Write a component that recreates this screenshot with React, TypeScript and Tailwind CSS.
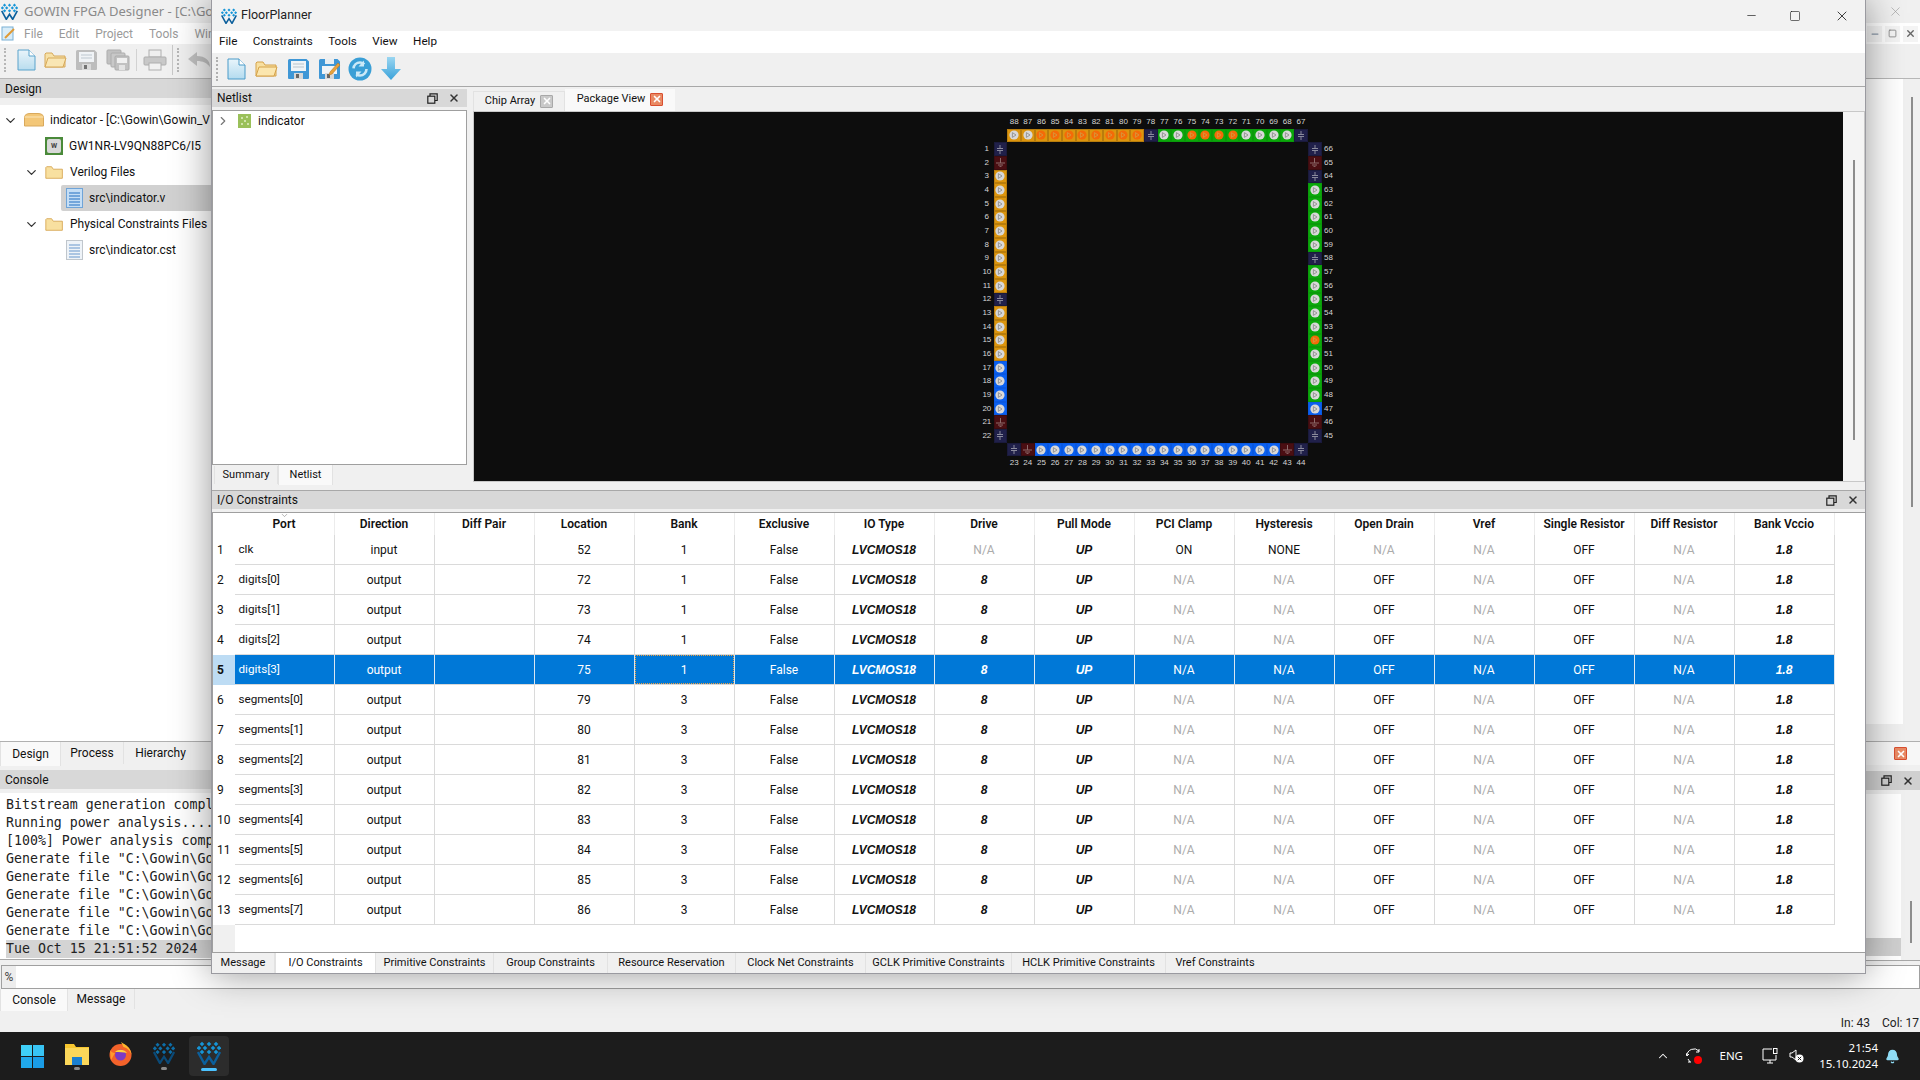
import { Bell, ChevronDown, ChevronRight, ChevronUp, Minus, Square, X } from "lucide-react";

type CellKind = "text" | "na" | "strong";

interface IRow {
  port: string;
  dir: string;
  loc: string;
  bank: string;
  drive: string;
  clamp: string;
  hyst: string;
  drain: string;
}

const columns = ["Port", "Direction", "Diff Pair", "Location", "Bank", "Exclusive", "IO Type", "Drive", "Pull Mode", "PCI Clamp", "Hysteresis", "Open Drain", "Vref", "Single Resistor", "Diff Resistor", "Bank Vccio"];

const output = (port: string, loc: string, bank: string): IRow => ({ port, dir: "output", loc, bank, drive: "8", clamp: "N/A", hyst: "N/A", drain: "OFF" });

const rows: IRow[] = [
  { port: "clk", dir: "input", loc: "52", bank: "1", drive: "N/A", clamp: "ON", hyst: "NONE", drain: "N/A" },
  output("digits[0]", "72", "1"),
  output("digits[1]", "73", "1"),
  output("digits[2]", "74", "1"),
  output("digits[3]", "75", "1"),
  output("segments[0]", "79", "3"),
  output("segments[1]", "80", "3"),
  output("segments[2]", "81", "3"),
  output("segments[3]", "82", "3"),
  output("segments[4]", "83", "3"),
  output("segments[5]", "84", "3"),
  output("segments[6]", "85", "3"),
  output("segments[7]", "86", "3"),
];

type PinKind = "o" | "O" | "g" | "G" | "b" | "n" | "r";

const pinBg: Record<PinKind, string> = {
  o: "bg-[#dc950e] border-[#b97d0c]",
  O: "bg-[#dc950e] border-[#b97d0c]",
  g: "bg-[#0aa80a] border-[#0a9a0a]",
  G: "bg-[#0aa80a] border-[#0a9a0a]",
  b: "bg-[#0a60f0] border-[#0a58e0]",
  n: "bg-[#20204a] border-[#1a1a3c]",
  r: "bg-[#4a0e12] border-[#3c0c0f]",
};

const topPins: [string, PinKind][] = [["88", "o"], ["87", "o"], ["86", "O"], ["85", "O"], ["84", "O"], ["83", "O"], ["82", "O"], ["81", "O"], ["80", "O"], ["79", "O"], ["78", "n"], ["77", "g"], ["76", "g"], ["75", "G"], ["74", "G"], ["73", "G"], ["72", "G"], ["71", "g"], ["70", "g"], ["69", "g"], ["68", "g"], ["67", "n"]];
const leftKinds = "nrooooooooonoooobbbbrn".split("") as PinKind[];
const rightKinds = "nrngggggngggggGggggbrn".split("") as PinKind[];
const bottomKinds = "nrbbbbbbbbbbbbbbbbbbrn".split("") as PinKind[];

function Pin({ kind }: { kind: PinKind }) {
  const hot = kind === "O" || kind === "G";
  return (
    <div className={`flex h-[13.67px] w-[13.67px] items-center justify-center border-[0.5px] ${pinBg[kind]}`}>
      {kind === "n" && (
        <svg width="8" height="9" viewBox="0 0 8 9" fill="none" stroke="#8a8a9c" strokeWidth="1">
          <path d="M4 0v3M1 3.5h6M1 5.5h6M4 6v3" />
        </svg>
      )}
      {kind === "r" && (
        <svg width="9" height="9" viewBox="0 0 9 9" fill="none" stroke="#8c6a6a" strokeWidth="1">
          <path d="M4.5 0v5M0 5h9M2 7h5M3.5 8.6h2" />
        </svg>
      )}
      {kind !== "n" && kind !== "r" && (
        <svg width="10" height="10" viewBox="0 0 10 10">
          <circle cx="5" cy="5" r="4.6" fill={hot ? "#f46a08" : "#d8d8d8"} />
          <path d="M3.4 2.6 7 5 3.4 7.4Z" fill="none" stroke={hot ? "#d49a40" : "#8f8f8f"} strokeWidth="0.9" />
        </svg>
      )}
    </div>
  );
}

function PinNum({ n }: { n: string }) {
  return <div className="flex h-[13.67px] w-[13.67px] items-center justify-center font-['Liberation_Sans',sans-serif] text-[8px] text-[#d6d6d6]">{n}</div>;
}

function PackageView() {
  const side = Array.from({ length: 22 }, (_, i) => i);
  return (
    <div className="ml-[506px] w-[356px] pt-[3px]">
      <div className="flex pl-[27.34px]">{topPins.map(([n]) => <PinNum key={n} n={n} />)}</div>
      <div className="flex pl-[27.34px]">{topPins.map(([n, k]) => <Pin key={n} kind={k} />)}</div>
      <div className="flex">
        <div>{side.map((i) => <PinNum key={i} n={String(i + 1)} />)}</div>
        <div>{side.map((i) => <Pin key={i} kind={leftKinds[i]} />)}</div>
        <div className="w-[300.74px]" />
        <div>{side.map((i) => <Pin key={i} kind={rightKinds[i]} />)}</div>
        <div>{side.map((i) => <PinNum key={i} n={String(66 - i)} />)}</div>
      </div>
      <div className="flex pl-[27.34px]">{side.map((i) => <Pin key={i} kind={bottomKinds[i]} />)}</div>
      <div className="flex pl-[27.34px]">{side.map((i) => <PinNum key={i} n={String(23 + i)} />)}</div>
    </div>
  );
}

function GowinLogo({ size = 16, dim = false }: { size?: number; dim?: boolean }) {
  const top = dim ? "#0d6ea8" : "#1595d8";
  const low = dim ? "#0a4a78" : "#0b5f9c";
  const d = [[5, 3], [12, 3], [19, 3], [2, 7], [8, 7], [16, 7], [22, 7], [5, 11], [12, 11], [19, 11]];
  return (
    <svg width={size} height={size} viewBox="0 0 24 24">
      {d.map(([x, y]) => (
        <path key={`${x}-${y}`} d={`M${x} ${y - 2.3}l2.3 2.3-2.3 2.3-2.3-2.3Z`} fill={top} />
      ))}
      <path d="M1 11 7.5 23 12 16l4.500 7L23 11" fill="none" stroke={low} strokeWidth="2.4" />
    </svg>
  );
}

function DocIcon() {
  return (
    <svg width="19" height="22" viewBox="0 0 19 22">
      <defs>
        <linearGradient id="docFill" x1="0" y1="0" x2="0" y2="1">
          <stop offset="0" stopColor="#e9f5fb" />
          <stop offset="1" stopColor="#b3dbef" />
        </linearGradient>
      </defs>
      <path d="M1 1h11l6 6v14H1Z" fill="url(#docFill)" stroke="#4a9bc9" />
      <path d="M12 1v6h6" fill="#ffffff" stroke="#4a9bc9" />
    </svg>
  );
}

function ListFileIcon({ blue = false }: { blue?: boolean }) {
  const lines = [5, 8, 11, 14, 17];
  return (
    <svg width="17" height="20" viewBox="0 0 17 20">
      <rect x="0.5" y="0.5" width="16" height="19" fill={blue ? "#c5def5" : "#eef3f8"} stroke={blue ? "#6fa4d8" : "#c0c6cc"} />
      {lines.map((y) => (
        <path key={y} d={`M3 ${y}h11`} stroke={blue ? "#4f8fd0" : "#8fb0d8"} strokeWidth="1.4" />
      ))}
    </svg>
  );
}

function FolderIcon({ w = 23, h = 18, open = true }: { w?: number; h?: number; open?: boolean }) {
  return (
    <svg width={w} height={h} viewBox="0 0 23 18">
      <path d="M1 3V16h20V5H10L8 2H2Z" fill="#f8e0a0" stroke="#d5a24a" />
      {open && <path d="M1 16 4 7h18l-3 9Z" fill="#fbe6ae" stroke="#d5a24a" />}
    </svg>
  );
}

function ClosedDiskIcon() {
  return (
    <svg width="20" height="14" viewBox="0 0 20 14">
      <path d="M0.500 4C0.500 2 3 0.500 6 0.500h8c3 0 5.500 1.500 5.500 3.500v9H0.500Z" fill="#f3c778" stroke="#d9a95c" />
      <path d="M0.500 4h19" stroke="#fbe6ba" />
    </svg>
  );
}

function FloppyIcon({ grey = false, pencil = false }: { grey?: boolean; pencil?: boolean }) {
  const body = grey ? "#b8b8b8" : "#3f97d6";
  return (
    <svg width="23" height="22" viewBox="0 0 23 22">
      <path d="M1 2.500A1.500 1.500 0 0 1 2.500 1h17L22 3.500V20a1 1 0 0 1-1 1H2a1 1 0 0 1-1-1Z" fill={body} />
      <rect x="4" y={pencil ? 8 : 3} width="15" height={pencil ? 8 : 10} fill="#f0f4f7" />
      {pencil ? <rect x="7" y="1" width="9" height="5" fill="#e8eef2" /> : <path d="M6 6h11M6 9h11" stroke="#b9c4cc" />}
      <rect x="7" y="15" width="9" height="6" fill="#d8d8d8" />
      <rect x="9" y="16" width="3" height="4" fill="#666" />
      {pencil && <path d="M12 14 20 5l2 2-8 9-3 1Z" fill="#e8a23c" stroke="#b87a20" strokeWidth="0.6" />}
    </svg>
  );
}

function StackFloppyIcon() {
  return (
    <svg width="24" height="22" viewBox="0 0 24 22">
      <rect x="1" y="1" width="14" height="14" rx="1" fill="#bdbdbd" stroke="#a5a5a5" />
      <rect x="5" y="4" width="14" height="14" rx="1" fill="#c4c4c4" stroke="#a5a5a5" />
      <rect x="9" y="7" width="14" height="14" rx="1" fill="#bdbdbd" stroke="#a5a5a5" />
      <rect x="11" y="9" width="10" height="5" fill="#f0f0f0" />
      <rect x="13" y="16" width="6" height="5" fill="#e2e2e2" />
    </svg>
  );
}

function PrintIcon() {
  return (
    <svg width="24" height="22" viewBox="0 0 24 22">
      <rect x="6" y="1" width="12" height="7" fill="#efefef" stroke="#a8a8a8" />
      <rect x="1" y="8" width="22" height="8" rx="1" fill="#c4c4c4" stroke="#a8a8a8" />
      <rect x="6" y="14" width="12" height="7" fill="#f2f2f2" stroke="#a8a8a8" />
    </svg>
  );
}

function RefreshIcon() {
  return (
    <svg width="24" height="24" viewBox="0 0 24 24">
      <circle cx="12" cy="12" r="11.500" fill="#3a9fd6" />
      <circle cx="12" cy="12" r="6.500" fill="none" stroke="#cbe9f7" strokeWidth="2.600" strokeDasharray="14 6.500" />
      <path d="M16 3.500v6h-5.500ZM8 20.500v-6h5.500Z" fill="#cbe9f7" />
    </svg>
  );
}

function DownIcon() {
  return (
    <svg width="20" height="24" viewBox="0 0 20 24">
      <defs>
        <linearGradient id="downFill" x1="0" y1="0" x2="0" y2="1">
          <stop offset="0" stopColor="#9ad6f1" />
          <stop offset="1" stopColor="#3aa2da" />
        </linearGradient>
      </defs>
      <path d="M6 0h8v12h6L10 23 0 12h6Z" fill="url(#downFill)" />
    </svg>
  );
}

function Grip({ className = "" }: { className?: string }) {
  return <div className={`h-[24px] w-[2px] border-l-2 border-dotted border-[#b0b0b0] ${className}`} />;
}

function DockButtons() {
  return (
    <div className="flex items-center gap-[10px]">
      <svg width="11" height="11" viewBox="0 0 11 11" fill="none" stroke="#222" strokeWidth="1.200">
        <path d="M3 3V.8h7.200V7.500H8" />
        <rect x=".8" y="3.200" width="7" height="7" />
      </svg>
      <X size={12} strokeWidth={3} className="text-[#333]" />
    </div>
  );
}

function TabButton({ label, active = false, className = "" }: { label: string; active?: boolean; className?: string }) {
  return (
    <div className={`flex items-center justify-center whitespace-nowrap border-[#e2e2e2] ${active ? "bg-[#f9f9f9] border-x" : "border-r"} ${className}`}>
      {label}
    </div>
  );
}

function TableRow({ row, index }: { row: IRow; index: number }) {
  const selected = index === 4;
  const cells: [string, CellKind][] = [
    [row.dir, "text"],
    ["", "text"],
    [row.loc, "text"],
    [row.bank, "text"],
    ["False", "text"],
    ["LVCMOS18", "strong"],
    [row.drive, row.drive === "N/A" ? "na" : "strong"],
    ["UP", "strong"],
    [row.clamp, row.clamp === "N/A" ? "na" : "text"],
    [row.hyst, row.hyst === "N/A" ? "na" : "text"],
    [row.drain, row.drain === "N/A" ? "na" : "text"],
    ["N/A", "na"],
    ["OFF", "text"],
    ["N/A", "na"],
    ["1.8", "strong"],
  ];
  const border = selected ? "border-r border-r-[#d8e6f2] border-b-[#d8d8d8]" : "border-r border-[#dadada]";

  return (
    <div className="flex h-[30px]">
      <div className={`flex w-[21.500px] items-center pl-[4px] ${selected ? "bg-[#bddcf4] font-bold" : "bg-white"}`}>{index + 1}</div>
      <div className={`flex w-[100px] items-center border-b pl-[4px] text-[11.700px] ${border} ${selected ? "bg-[#0078d7] text-white" : ""}`}>{row.port}</div>
      {cells.map(([value, kind], i) => {
        let tone = "";
        if (kind === "na") tone = "text-[#ababab]";
        if (kind === "strong") tone = "font-['Liberation_Sans',sans-serif] font-bold italic";
        if (selected) tone = kind === "strong" ? "font-['Liberation_Sans',sans-serif] font-bold italic text-white" : "text-white";
        return (
          <div key={i} className={`relative flex w-[100px] items-center justify-center border-b ${border} ${selected ? "bg-[#0078d7]" : ""} ${tone}`}>
            {value}
            {selected && i === 3 && <div className="absolute inset-0 border border-dotted border-[#f0a040]" />}
          </div>
        );
      })}
    </div>
  );
}

function FloorPlanner() {
  return (
    <div className="absolute left-[211px] top-0 flex h-[974px] w-[1655px] flex-col border-x border-b border-[#9a9aa0] bg-[#f0f0f0] text-[12px] text-[#111] shadow-[0_0_36px_rgba(0,0,0,0.42)]">
      <div className="flex h-[31px] shrink-0 items-center bg-[#f2f2f2] pl-[9px]">
        <GowinLogo size={16} />
        <span className="ml-[4px] text-[12.500px] text-[#222]">FloorPlanner</span>
        <div className="ml-auto flex items-center">
          <Minus size={13} strokeWidth={1.200} className="mr-[31px]" />
          <Square size={12} strokeWidth={1.200} className="mr-[33px]" />
          <X size={16} strokeWidth={1.200} className="mr-[15px]" />
        </div>
      </div>
      <div className="flex h-[22px] shrink-0 items-center gap-[15.500px] bg-white pl-[7px] text-[11.700px]">
        <span>File</span>
        <span>Constraints</span>
        <span>Tools</span>
        <span>View</span>
        <span>Help</span>
      </div>
      <div className="flex h-[34px] shrink-0 items-center border-b border-[#a8a8a8] pb-[2px] pl-[4px]">
        <Grip />
        <div className="ml-[9px] flex items-center gap-[9px]">
          <DocIcon />
          <FolderIcon />
          <FloppyIcon />
          <span className="-ml-[1px]"><FloppyIcon pencil /></span>
          <span className="-ml-[2px]"><RefreshIcon /></span>
          <DownIcon />
        </div>
      </div>

      <div className="flex h-[404px] shrink-0 border-b border-[#a8a8a8] pt-[2px]">
        <div className="flex w-[255px] shrink-0 flex-col">
          <div className="flex h-[18px] shrink-0 items-center justify-between bg-[#d8d8d8] pl-[5px] pr-[7px]">
            <span>Netlist</span>
            <DockButtons />
          </div>
          <div className="mt-[3px] h-[355px] shrink-0 border border-[#9f9f9f] bg-white">
            <div className="flex h-[20px] items-center pl-[3px]">
              <ChevronRight size={14} className="text-[#777]" />
              <svg width="13" height="14" viewBox="0 0 13 14" className="ml-[8px]">
                <rect width="13" height="14" fill="#9ac05a" />
                <path d="M3 4h2M8 3h2M6 7h2M3 10h2M9 10h2" stroke="#e4f0c8" strokeWidth="1.400" />
              </svg>
              <span className="ml-[7px]">indicator</span>
            </div>
          </div>
          <div className="flex h-[20px] text-[11px]">
            <TabButton label="Summary" className="ml-[2px] mt-[1px] h-[18px] w-[64px] border-l" />
            <TabButton label="Netlist" active className="h-[20px] w-[55px]" />
          </div>
        </div>
        <div className="ml-[6px] flex min-w-0 flex-1 flex-col">
          <div className="flex h-[22px] shrink-0 items-end text-[11px]">
            <div className="flex h-[20px] w-[92px] items-center justify-center gap-[5px] border-x border-t border-[#e2e2e2] pb-[1px]">
              Chip Array
              <span className="flex h-[13px] w-[13px] items-center justify-center rounded-[1px] border border-[#a8a8a8] bg-[#c9c9c9]"><X size={10} strokeWidth={4} className="text-white" /></span>
            </div>
            <div className="flex h-[22px] w-[110px] items-center justify-center gap-[5px] bg-[#f9f9f9] pb-[2px]">
              Package View
              <span className="flex h-[13px] w-[13px] items-center justify-center rounded-[1px] border border-[#d94f30] bg-[#e98a64]"><X size={10} strokeWidth={4} className="text-white" /></span>
            </div>
          </div>
          <div className="flex h-[371px] shrink-0 border border-[#c8c8c8] bg-[#f4f4f4]">
            <div className="w-[1369px] shrink-0 bg-[#0d0d0d]">
              <PackageView />
            </div>
            <div className="flex flex-1 justify-center pt-[48px]">
              <div className="h-[280px] w-[2px] bg-[#8c8c8c]" />
            </div>
          </div>
        </div>
      </div>

      <div className="flex h-[18px] shrink-0 items-center justify-between bg-[#d8d8d8] pl-[5px] pr-[6px]">
        <span>I/O Constraints</span>
        <DockButtons />
      </div>
      <div className="mt-[3px] flex h-[441px] shrink-0 flex-col border-y border-l border-[#9f9f9f] bg-white">
        <div className="flex h-[22px] shrink-0 font-semibold">
          <div className="w-[21.500px] bg-white" />
          {columns.map((c) => (
            <div key={c} className="relative flex w-[100px] items-center justify-center border-r border-[#ececec]">
              {c === "Port" && <ChevronDown size={9} className="absolute left-[45px] top-[-2px] text-[#999]" />}
              {c}
            </div>
          ))}
        </div>
        {rows.map((row, i) => (
          <TableRow key={row.port} row={row} index={i} />
        ))}
        <div className="w-[21.500px] flex-1 bg-[#f0f0f0]" />
      </div>
      <div className="flex h-[20px] shrink-0 text-[11px]">
        <TabButton label="Message" className="w-[63px]" />
        <TabButton label="I/O Constraints" active className="w-[101px] bg-white" />
        <TabButton label="Primitive Constraints" className="w-[118px]" />
        <TabButton label="Group Constraints" className="w-[114px]" />
        <TabButton label="Resource Reservation" className="w-[128px]" />
        <TabButton label="Clock Net Constraints" className="w-[130px]" />
        <TabButton label="GCLK Primitive Constraints" className="w-[146px]" />
        <TabButton label="HCLK Primitive Constraints" className="w-[154px]" />
        <TabButton label="Vref Constraints" className="w-[98px] border-r-0" />
      </div>
    </div>
  );
}

function TreeRow({ indent, chevron = false, icon, label, selected = false }: { indent: number; chevron?: boolean; icon: React.ReactNode; label: string; selected?: boolean }) {
  return (
    <div className="flex h-[26px] items-center" style={{ paddingLeft: indent }}>
      <div className={`flex h-[26px] flex-1 items-center ${selected ? "rounded-l-[2px] bg-[#d1d1d1]" : ""}`}>
        {chevron && <ChevronDown size={15} className="mr-[6px] text-[#333]" />}
        {icon}
        <span className="ml-[6px] whitespace-nowrap">{label}</span>
      </div>
    </div>
  );
}

const consoleLines = ["Bitstream generation compl", "Running power analysis....", "[100%] Power analysis comp", 'Generate file "C:\\Gowin\\Go', 'Generate file "C:\\Gowin\\Go', 'Generate file "C:\\Gowin\\Go', 'Generate file "C:\\Gowin\\Go', 'Generate file "C:\\Gowin\\Go'];

function DesignerWindow() {
  return (
    <div className="flex h-[1032px] flex-col bg-[#f0f0f0] text-[12px] text-[#111]">
      <div className="flex h-[23px] shrink-0 items-center pl-[1px]">
        <GowinLogo size={17} />
        <span className="ml-[6px] whitespace-nowrap font-['Noto_Sans',sans-serif] text-[13px] text-[#8a8a8a]">GOWIN FPGA Designer - [C:\Gowin\</span>
        <X size={15} strokeWidth={1} className="ml-auto mr-[17px] text-[#9a9a9a]" />
      </div>
      <div className="flex h-[21px] shrink-0 items-center bg-white pl-[1px] text-[#9a9a9a]">
        <svg width="15" height="15" viewBox="0 0 15 15">
          <rect x="1" y="1" width="11" height="13" fill="#d8ecf8" stroke="#7ab0d4" />
          <path d="M4 12 13 3" stroke="#e09a34" strokeWidth="2" />
        </svg>
        <span className="ml-[8px]">File</span>
        <span className="ml-[16px]">Edit</span>
        <span className="ml-[16px]">Project</span>
        <span className="ml-[16px]">Tools</span>
        <span className="ml-[16px]">Win</span>
        <div className="ml-auto flex items-center gap-[3px] pr-[2px]">
          <span className="flex h-[16px] w-[15px] items-center justify-center bg-[#f4f4f4]"><Minus size={10} strokeWidth={3} className="text-[#8a98a8]" /></span>
          <span className="flex h-[16px] w-[15px] items-center justify-center bg-[#f4f4f4]"><Square size={9} strokeWidth={2} className="text-[#777]" /></span>
          <span className="flex h-[16px] w-[15px] items-center justify-center bg-[#f4f4f4]"><X size={11} strokeWidth={3} className="text-[#666]" /></span>
        </div>
      </div>
      <div className="flex h-[35px] shrink-0 items-center border-b border-[#b0b0b0] pb-[2px] pl-[4px] opacity-90">
        <Grip />
        <div className="ml-[11px] flex items-center gap-[8px]">
          <DocIcon />
          <FolderIcon />
          <FloppyIcon grey />
          <StackFloppyIcon />
        </div>
        <div className="mx-[6px] h-[22px] w-px bg-[#cfcfcf]" />
        <PrintIcon />
        <div className="ml-[5px] h-[30px] w-px bg-[#c4c4c4]" />
        <Grip className="ml-[4px]" />
        <svg width="24" height="16" viewBox="0 0 24 16" className="ml-[8px]">
          <path d="M1 7 10 0v4c8 0 13 4 13 11C20 11 16 9 10 9v5Z" fill="#bdbdbd" />
        </svg>
      </div>

      <div className="flex h-[883px] shrink-0">
        <div className="flex w-[211px] shrink-0 flex-col">
          <div className="flex h-[19px] shrink-0 items-center bg-[#d8d8d8] pl-[5px] pt-[1px]">Design</div>
          <div className="mt-[7px] h-[636px] shrink-0 bg-white pt-[2px]">
            <TreeRow indent={3} chevron icon={<ClosedDiskIcon />} label="indicator - [C:\Gowin\Gowin_V" />
            <TreeRow
              indent={45}
              icon={
                <span className="flex h-[18px] w-[18px] items-center justify-center bg-[#4a8a3a]">
                  <span className="flex h-[14px] w-[14px] items-center justify-center rounded-[2px] bg-[#d8d8d8] text-[7px] font-bold text-[#444]">W</span>
                </span>
              }
              label="GW1NR-LV9QN88PC6/I5"
            />
            <TreeRow indent={24} chevron icon={<FolderIcon w={19} h={15} open={false} />} label="Verilog Files" />
            <TreeRow indent={61} selected icon={<span className="ml-[5px]"><ListFileIcon blue /></span>} label="src\indicator.v" />
            <TreeRow indent={24} chevron icon={<FolderIcon w={19} h={15} open={false} />} label="Physical Constraints Files" />
            <TreeRow indent={66} icon={<ListFileIcon />} label="src\indicator.cst" />
          </div>
          <div className="flex h-[25px] shrink-0 border-t border-[#b0b0b0]">
            <TabButton label="Design" active className="w-[61px]" />
            <TabButton label="Process" className="h-[22px] w-[63px]" />
            <TabButton label="Hierarchy" className="h-[22px] w-[73px] border-r-0" />
          </div>
          <div className="mt-[4px] flex h-[19px] shrink-0 items-center bg-[#d8d8d8] pl-[5px]">Console</div>
          <div className="mt-[4px] h-[167px] shrink-0 overflow-hidden border-b border-[#a8a8a8] bg-white pl-[6px] pt-[3px] font-['DejaVu_Sans_Mono',monospace] text-[13.250px] leading-[18px] text-[#222]">
            {consoleLines.map((line, i) => (
              <div key={i} className="whitespace-nowrap">{line}</div>
            ))}
            <div className="bg-[#d4d4d4]">Tue Oct 15 21:51:52 2024</div>
          </div>
        </div>
        <div className="flex-1" />
        <div className="flex w-[54px] shrink-0 flex-col">
          <div className="flex h-[645px] shrink-0">
            <div className="w-[37px] bg-white" />
            <div className="flex flex-1 justify-center pt-[18px]">
              <div className="h-[410px] w-[2px] bg-[#8c8c8c]" />
            </div>
          </div>
          <div className="h-[18px] shrink-0 border-b border-[#b0b0b0]" />
          <div className="flex h-[23px] shrink-0 items-center justify-end bg-[#f7f7f7] pr-[13px]">
            <span className="flex h-[13px] w-[13px] items-center justify-center rounded-[1px] border border-[#d94f30] bg-[#e98a64]"><X size={10} strokeWidth={4} className="text-white" /></span>
          </div>
          <div className="mt-[6px] flex h-[19px] shrink-0 items-center justify-end bg-[#d0d0d0] pr-[6px]">
            <DockButtons />
          </div>
          <div className="mt-[4px] flex h-[167px] shrink-0 border-b border-[#a8a8a8]">
            <div className="flex w-[35px] flex-col justify-end bg-white pb-[4px]">
              <div className="h-[18px] bg-[#d0d0d0]" />
            </div>
            <div className="flex flex-1 items-end justify-center pb-[17px]">
              <div className="h-[42px] w-[2px] bg-[#8c8c8c]" />
            </div>
          </div>
        </div>
      </div>

      <div className="ml-[1px] mt-[3px] flex h-[24px] shrink-0 border border-[#a0a0a0] bg-white">
        <div className="flex w-[14px] items-center justify-center bg-[#ededed] text-[#444]">%</div>
      </div>
      <div className="flex h-[22px] shrink-0">
        <TabButton label="Console" active className="w-[68px]" />
        <TabButton label="Message" className="h-[20px] w-[67px]" />
      </div>
      <div className="flex flex-1 items-center justify-end gap-[12px] pr-[1px] pt-[3px] text-[#222]">
        <span>In: 43</span>
        <span>Col: 17</span>
      </div>
    </div>
  );
}

function Taskbar() {
  return (
    <div className="flex h-[48px] items-center bg-[#1c1c1c] text-white">
      <div className="ml-[21px] grid h-[23px] w-[23px] grid-cols-2 gap-[1px]">
        <span className="bg-[#3fd0f8]" />
        <span className="bg-[#38c4f4]" />
        <span className="bg-[#20a8ea]" />
        <span className="bg-[#1a9ce6]" />
      </div>
      <div className="ml-[21px] flex flex-col items-center">
        <svg width="24" height="23" viewBox="0 0 24 23">
          <path d="M0 2h9l2 3h13v18H0Z" fill="#f7c62f" />
          <rect x="0" y="6" width="24" height="17" fill="#fbd75a" />
          <rect x="7" y="15" width="10" height="8" fill="#1a7fd0" />
        </svg>
        <div className="mt-[2px] h-[3px] w-[6px] rounded-full bg-[#8a8a8a]" />
      </div>
      <div className="ml-[20px] pb-[5px]">
        <svg width="23" height="24" viewBox="0 0 23 24">
          <circle cx="11.500" cy="13" r="11" fill="#f3622a" />
          <path d="M12 0c5 3 10 6 10.500 13-1-4-4-7-8-8Z" fill="#fcb72d" />
          <path d="M1 8c1 2 3 3 5 3L2 18Z" fill="#ff9a2e" />
          <circle cx="11.500" cy="13" r="5.500" fill="#7b3bc4" />
          <path d="M6 10c3-3 9-3 12 1-3-1-8-1-12-1Z" fill="#ffd23a" />
        </svg>
      </div>
      <div className="ml-[21px] flex flex-col items-center">
        <GowinLogo size={22} dim />
        <div className="mt-[3px] h-[3px] w-[6px] rounded-full bg-[#8a8a8a]" />
      </div>
      <div className="ml-[14px] flex h-[40px] w-[40px] flex-col items-center justify-center rounded-[4px] bg-[#2c2c2c]">
        <GowinLogo size={24} />
        <div className="mt-[3px] h-[3px] w-[16px] rounded-full bg-[#4cc2ff]" />
      </div>
      <div className="ml-auto flex items-center pr-[20px] font-['Noto_Sans',sans-serif]">
        <ChevronUp size={14} strokeWidth={1.800} />
        <div className="relative ml-[16px] h-[16px] w-[16px]">
          <svg width="16" height="16" viewBox="0 0 16 16" fill="none" stroke="#fff" strokeWidth="1">
            <path d="M1 8a7 7 0 0 1 12-5M3 6 1 8 0 5M2 11l2 3M2 14h3" />
            <path d="M13 1v3h-3" />
          </svg>
          <div className="absolute bottom-0 right-0 h-[8px] w-[8px] rounded-full bg-[#f00]" />
        </div>
        <span className="ml-[17px] text-[11.500px]">ENG</span>
        <svg width="16" height="17" viewBox="0 0 16 17" fill="none" stroke="#fff" strokeWidth="1" className="ml-[19px]">
          <path d="M10 1H1v11h13V7M5 15h6M8 12v3" />
          <rect x="11.500" y="0.500" width="3.500" height="5" />
        </svg>
        <svg width="15" height="14" viewBox="0 0 15 14" className="ml-[11px]">
          <path d="M1 4h2l4-3v10L3 8H1Z" fill="none" stroke="#fff" />
          <circle cx="10.500" cy="9.500" r="4" fill="#fff" />
          <path d="m8.800 7.800 3.400 3.400m0-3.400-3.400 3.400" stroke="#1c1c1c" />
        </svg>
        <div className="ml-[14px] flex w-[60px] flex-col items-end text-[11.500px] leading-[16px]">
          <span>21:54</span>
          <span className="whitespace-nowrap">15.10.2024</span>
        </div>
        <Bell size={15} className="ml-[7px] fill-[#8fdcf5] text-[#8fdcf5]" />
      </div>
    </div>
  );
}

export default function App() {
  return (
    <div className="relative h-[1080px] w-[1920px] overflow-hidden font-['Roboto',sans-serif]">
      <DesignerWindow />
      <Taskbar />
      <FloorPlanner />
    </div>
  );
}
